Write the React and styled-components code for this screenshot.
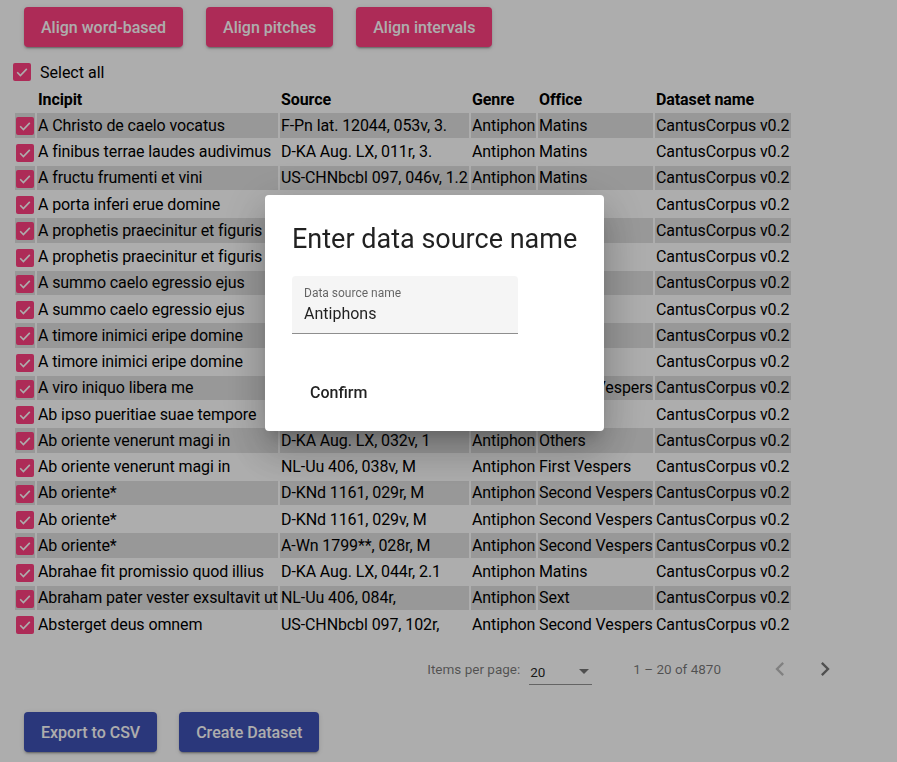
import React from "react";
import styled, { createGlobalStyle } from "styled-components";

const GlobalStyle = createGlobalStyle`
  body {
    margin: 0;
    background: #fff;
    font-family: Roboto, "Noto Sans", sans-serif;
    color: #000;
  }
`;

const rows = [
  ["A Christo de caelo vocatus", "F-Pn lat. 12044, 053v, 3.", "Antiphon", "Matins"],
  ["A finibus terrae laudes audivimus", "D-KA Aug. LX, 011r, 3.", "Antiphon", "Matins"],
  ["A fructu frumenti et vini", "US-CHNbcbl 097, 046v, 1.2", "Antiphon", "Matins"],
  ["A porta inferi erue domine", "D-KA Aug. LX, 104v, L", "Antiphon", "Lauds"],
  ["A prophetis praecinitur et figuris", "NL-Uu 406, 027r, M", "Antiphon", "Matins"],
  ["A prophetis praecinitur et figuris", "D-KNd 1161, 023v, M", "Antiphon", "Matins"],
  ["A summo caelo egressio ejus", "A-Wn 1799**, 012r, L", "Antiphon", "Lauds"],
  ["A summo caelo egressio ejus", "D-KA Aug. LX, 019v, 1", "Antiphon", "Others"],
  ["A timore inimici eripe domine", "NL-Uu 406, 101v, M", "Antiphon", "Matins"],
  ["A timore inimici eripe domine", "US-CHNbcbl 097, 088r,", "Antiphon", "Matins"],
  ["A viro iniquo libera me", "D-KNd 1161, 112r, V2", "Antiphon", "Second Vespers"],
  ["Ab ipso pueritiae suae tempore", "F-Pn lat. 12044, 190v, 2.", "Antiphon", "Matins"],
  ["Ab oriente venerunt magi in", "D-KA Aug. LX, 032v, 1", "Antiphon", "Others"],
  ["Ab oriente venerunt magi in", "NL-Uu 406, 038v, M", "Antiphon", "First Vespers"],
  ["Ab oriente*", "D-KNd 1161, 029r, M", "Antiphon", "Second Vespers"],
  ["Ab oriente*", "D-KNd 1161, 029v, M", "Antiphon", "Second Vespers"],
  ["Ab oriente*", "A-Wn 1799**, 028r, M", "Antiphon", "Second Vespers"],
  ["Abrahae fit promissio quod illius", "D-KA Aug. LX, 044r, 2.1", "Antiphon", "Matins"],
  ["Abraham pater vester exsultavit ut", "NL-Uu 406, 084r,", "Antiphon", "Sext"],
  ["Absterget deus omnem", "US-CHNbcbl 097, 102r,", "Antiphon", "Second Vespers"],
];

const Page = styled.div`
  height: 762px;
  overflow: hidden;
`;

const Toolbar = styled.div`
  display: flex;
  gap: 23px;
  padding: 7px 0 0 24px;
`;

const RaisedButton = styled.button`
  height: 40px;
  padding: 0 17px;
  border: none;
  border-radius: 4px;
  background: ${(p) => p.$color};
  color: #fff;
  font-family: Roboto, sans-serif;
  font-size: 16px;
  font-weight: 500;
  box-shadow: 0 3px 1px -2px rgba(0, 0, 0, 0.2), 0 2px 2px 0 rgba(0, 0, 0, 0.14),
    0 1px 5px 0 rgba(0, 0, 0, 0.12);
  cursor: pointer;
`;

const SelectAllRow = styled.label`
  display: flex;
  align-items: center;
  gap: 9px;
  margin: 16px 0 0 13px;
  height: 18px;
  font-size: 16px;
`;

const Box = styled.span`
  display: block;
  width: 18px;
  height: 18px;
  border-radius: 2px;
  background: #ff4081;
  margin-top: ${(p) => (p.$inCell ? "2px" : "0")};
  svg {
    display: block;
  }
`;

const Check = ({ inCell }) => (
  <Box $inCell={inCell}>
    <svg width="18" height="18" viewBox="0 0 18 18">
      <path d="M4.2 9.3l3.2 3.2 6.4-6.6" fill="none" stroke="#fff" strokeWidth="1.6" />
    </svg>
  </Box>
);

const Table = styled.table`
  margin: 4px 0 0 13px;
  border-spacing: 2px;
  table-layout: fixed;
  width: 780px;
  font-size: 16px;
  letter-spacing: -0.1px;
`;

const Th = styled.th`
  width: ${(p) => p.$w}px;
  height: 24.26px;
  padding: 3px 1px 0;
  box-sizing: border-box;
  text-align: left;
  vertical-align: top;
  font-weight: 700;
  white-space: nowrap;
`;

const Td = styled.td`
  height: 24.26px;
  padding: 0 1px;
  box-sizing: border-box;
  vertical-align: middle;
  white-space: nowrap;
  overflow: hidden;
  background: ${(p) => (p.$striped ? "#e1e1e1" : "transparent")};
`;

const Paginator = styled.div`
  display: flex;
  align-items: center;
  justify-content: flex-end;
  height: 56px;
  margin-top: 3px;
  padding-right: 52px;
  font-size: 13.5px;
  color: rgba(0, 0, 0, 0.54);
`;

const PageSizeSelect = styled.div`
  display: flex;
  align-items: center;
  justify-content: space-between;
  width: 63px;
  height: 26px;
  margin: 6px 0 0 9px;
  border-bottom: 1px solid rgba(0, 0, 0, 0.42);
  box-sizing: border-box;
  color: rgba(0, 0, 0, 0.87);
  padding: 0 3px 0 1px;
`;

const Arrow = styled.span`
  width: 0;
  height: 0;
  border-left: 5px solid transparent;
  border-right: 5px solid transparent;
  border-top: 5px solid rgba(0, 0, 0, 0.54);
`;

const RangeLabel = styled.div`
  margin: 0 39px 0 41px;
`;

const IconButton = styled.button`
  width: 40px;
  height: 40px;
  padding: 0;
  border: none;
  background: transparent;
  display: flex;
  align-items: center;
  justify-content: center;
  color: ${(p) => (p.disabled ? "rgba(0,0,0,0.26)" : "rgba(0,0,0,0.54)")};
  & + & {
    margin-left: 5px;
  }
`;

const BottomBar = styled.div`
  display: flex;
  gap: 22px;
  padding: 15px 0 0 24px;
`;

const Backdrop = styled.div`
  position: fixed;
  inset: 0;
  background: rgba(0, 0, 0, 0.32);
`;

const Dialog = styled.div`
  position: absolute;
  left: 265px;
  top: 195px;
  width: 339px;
  box-sizing: border-box;
  padding: 28px 27px 21px;
  background: #fff;
  border-radius: 4px;
  box-shadow: 0 11px 15px -7px rgba(0, 0, 0, 0.2), 0 24px 38px 3px rgba(0, 0, 0, 0.14),
    0 9px 46px 8px rgba(0, 0, 0, 0.12);
  color: rgba(0, 0, 0, 0.87);
`;

const DialogTitle = styled.h2`
  margin: 0;
  font-size: 27px;
  line-height: 32px;
  font-weight: 400;
  white-space: nowrap;
`;

const Field = styled.div`
  margin-top: 21px;
  width: 226px;
  height: 58px;
  box-sizing: border-box;
  padding: 10px 12px 0;
  background: #f5f5f5;
  border-radius: 4px 4px 0 0;
  border-bottom: 1px solid rgba(0, 0, 0, 0.42);
`;

const FieldLabel = styled.div`
  font-size: 12px;
  line-height: 14px;
  color: rgba(0, 0, 0, 0.6);
`;

const FieldValue = styled.div`
  margin-top: 4px;
  font-size: 16px;
  line-height: 20px;
`;

const TextButton = styled.button`
  display: flex;
  align-items: center;
  height: 36px;
  margin-top: 40px;
  padding: 0 17px 0 18px;
  border: none;
  background: transparent;
  font-family: Roboto, sans-serif;
  font-size: 16px;
  font-weight: 500;
  color: rgba(0, 0, 0, 0.87);
`;

const ChevronLeft = () => (
  <svg width="28" height="28" viewBox="0 0 24 24" fill="currentColor">
    <path d="M15.41 7.41L14 6l-6 6 6 6 1.41-1.41L10.83 12z" />
  </svg>
);

const ChevronRight = () => (
  <svg width="28" height="28" viewBox="0 0 24 24" fill="currentColor">
    <path d="M10 6L8.59 7.41 13.17 12l-4.58 4.59L10 18l6-6z" />
  </svg>
);

// border-box column widths
const widths = [20, 241, 189, 65, 115, 136];

const App = () => {
  return (
    <Page>
      <GlobalStyle />
      <Toolbar>
        <RaisedButton $color="#ff4081">Align word-based</RaisedButton>
        <RaisedButton $color="#ff4081">Align pitches</RaisedButton>
        <RaisedButton $color="#ff4081">Align intervals</RaisedButton>
      </Toolbar>
      <SelectAllRow>
        <Check />
        Select all
      </SelectAllRow>
      <Table>
        <thead>
          <tr>
            <Th $w={widths[0]}></Th>
            <Th $w={widths[1]}>Incipit</Th>
            <Th $w={widths[2]}>Source</Th>
            <Th $w={widths[3]}>Genre</Th>
            <Th $w={widths[4]}>Office</Th>
            <Th $w={widths[5]}>Dataset name</Th>
          </tr>
        </thead>
        <tbody>
          {rows.map((r, i) => {
            const striped = i % 2 === 0;
            return (
              <tr key={i}>
                <Td $striped={striped}>
                  <Check inCell />
                </Td>
                <Td $striped={striped}>{r[0]}</Td>
                <Td $striped={striped}>{r[1]}</Td>
                <Td $striped={striped}>{r[2]}</Td>
                <Td $striped={striped}>{r[3]}</Td>
                <Td $striped={striped}>CantusCorpus v0.2</Td>
              </tr>
            );
          })}
        </tbody>
      </Table>
      <Paginator>
        <div>Items per page:</div>
        <PageSizeSelect>
          <span>20</span>
          <Arrow />
        </PageSizeSelect>
        <RangeLabel>1 – 20 of 4870</RangeLabel>
        <IconButton disabled>
          <ChevronLeft />
        </IconButton>
        <IconButton>
          <ChevronRight />
        </IconButton>
      </Paginator>
      <BottomBar>
        <RaisedButton $color="#3f51b5">Export to CSV</RaisedButton>
        <RaisedButton $color="#3f51b5">Create Dataset</RaisedButton>
      </BottomBar>
      <Backdrop>
        <Dialog>
          <DialogTitle>Enter data source name</DialogTitle>
          <Field>
            <FieldLabel>Data source name</FieldLabel>
            <FieldValue>Antiphons</FieldValue>
          </Field>
          <TextButton>Confirm</TextButton>
        </Dialog>
      </Backdrop>
    </Page>
  );
};

export default App;
